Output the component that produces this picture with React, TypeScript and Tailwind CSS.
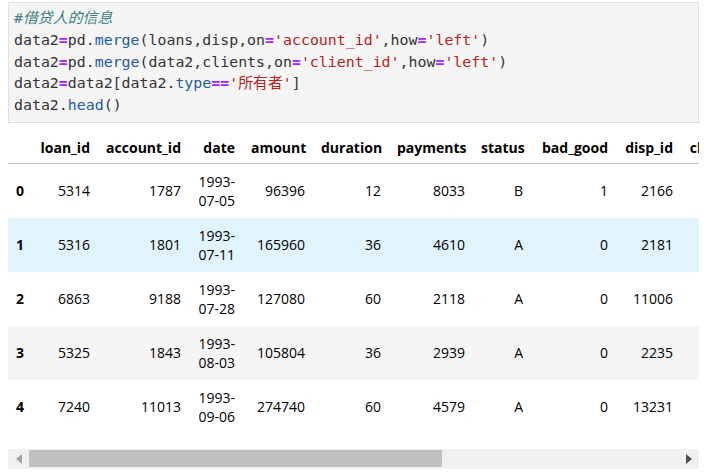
import React from "react";

const mono = "font-['DejaVu_Sans_Mono','Noto_Sans_CJK_SC',monospace]";

const cols = [
  { name: "loan_id", w: "w-[66px]" },
  { name: "account_id", w: "w-[91px]" },
  { name: "date", w: "w-[54px]" },
  { name: "amount", w: "w-[70px]" },
  { name: "duration", w: "w-[76px]" },
  { name: "payments", w: "w-[84px]" },
  { name: "status", w: "w-[58px]" },
  { name: "bad_good", w: "w-[85px]" },
  { name: "disp_id", w: "w-[65px]" },
  { name: "client_id", w: "w-[75px]" },
  { name: "type", w: "w-[70px]" },
  { name: "district_id", w: "w-[90px]" },
];

const rows = [
  ["5314", "1787", "1993-07-05", "96396", "12", "8033", "B", "1", "2166", "2166", "所有者", "30"],
  ["5316", "1801", "1993-07-11", "165960", "36", "4610", "A", "0", "2181", "2181", "所有者", "46"],
  ["6863", "9188", "1993-07-28", "127080", "60", "2118", "A", "0", "11006", "11314", "所有者", "45"],
  ["5325", "1843", "1993-08-03", "105804", "36", "2939", "A", "0", "2235", "2235", "所有者", "12"],
  ["7240", "11013", "1993-09-06", "274740", "60", "4579", "A", "0", "13231", "13539", "所有者", "1"],
];

function Op({ children }: { children: React.ReactNode }) {
  return <span className="font-bold text-[#aa22ff]">{children}</span>;
}
function Str({ children }: { children: React.ReactNode }) {
  return <span className="text-[#ba2121]">{children}</span>;
}
function Prop({ children }: { children: React.ReactNode }) {
  return <span className="text-[#1f5aa6]">{children}</span>;
}

export default function App() {
  return (
    <div className="min-h-screen w-[719px] bg-white pl-[8px] pr-[20px] pt-[2px]">
      <div className={`border border-[#e0e0e0] bg-[#f5f5f5] px-[5px] py-[5px] text-[14.9px] leading-[21.8px] text-[#333] ${mono}`}>
        <div className="italic text-[#408080]">#借贷人的信息</div>
        <div className="whitespace-pre">
          data2<Op>=</Op>pd.<Prop>merge</Prop>(loans,disp,on<Op>=</Op><Str>'account_id'</Str>,how<Op>=</Op><Str>'left'</Str>)
        </div>
        <div className="whitespace-pre">
          data2<Op>=</Op>pd.<Prop>merge</Prop>(data2,clients,on<Op>=</Op><Str>'client_id'</Str>,how<Op>=</Op><Str>'left'</Str>)
        </div>
        <div className="whitespace-pre">
          data2<Op>=</Op>data2[data2.<Prop>type</Prop><Op>==</Op><Str>'所有者'</Str>]
        </div>
        <div className="whitespace-pre">
          data2.<Prop>head</Prop>()
        </div>
      </div>

      <div className="mt-[6px] w-[691px] overflow-hidden font-['Open_Sans','Noto_Sans_CJK_SC',sans-serif] text-[14px] leading-[19px] text-black">
        <table className="w-[1080px] table-fixed border-collapse">
          <thead>
            <tr className="border-b border-[#bdbdbd]">
              <th className="w-[24px] px-[8px] pb-[6px] pt-[9px]" />
              {cols.map((c) => (
                <th key={c.name} className={`${c.w} px-[8px] pb-[6px] pt-[9px] text-right font-bold`}>
                  {c.name}
                </th>
              ))}
              <th />
            </tr>
          </thead>
          <tbody>
            {rows.map((r, i) => (
              <tr
                key={i}
                className={i === 1 ? "bg-[#e1f3fc]" : i === 3 ? "bg-[#f5f5f5]" : "bg-white"}
              >
                <th className="h-[54px] px-[8px] py-[8px] text-left font-bold">{i}</th>
                {r.map((v, j) => (
                  <td key={j} className="px-[8px] py-[8px] text-right align-middle">
                    {v}
                  </td>
                ))}
                <td />
              </tr>
            ))}
          </tbody>
        </table>
      </div>

      <div className="mt-[15px] flex h-[20px] w-[691px] items-center bg-[#f0f0f0]">
        <div className="flex w-[21px] items-center justify-center">
          <svg width="6" height="10" viewBox="0 0 6 10">
            <path d="M6 0 L0 5 L6 10 Z" fill="#a3a3a3" />
          </svg>
        </div>
        <div className="h-[17px] w-[413px] bg-[#c1c1c1]" />
        <div className="flex-1" />
        <div className="flex w-[21px] items-center justify-center">
          <svg width="6" height="10" viewBox="0 0 6 10">
            <path d="M0 0 L6 5 L0 10 Z" fill="#505050" />
          </svg>
        </div>
      </div>
    </div>
  );
}
